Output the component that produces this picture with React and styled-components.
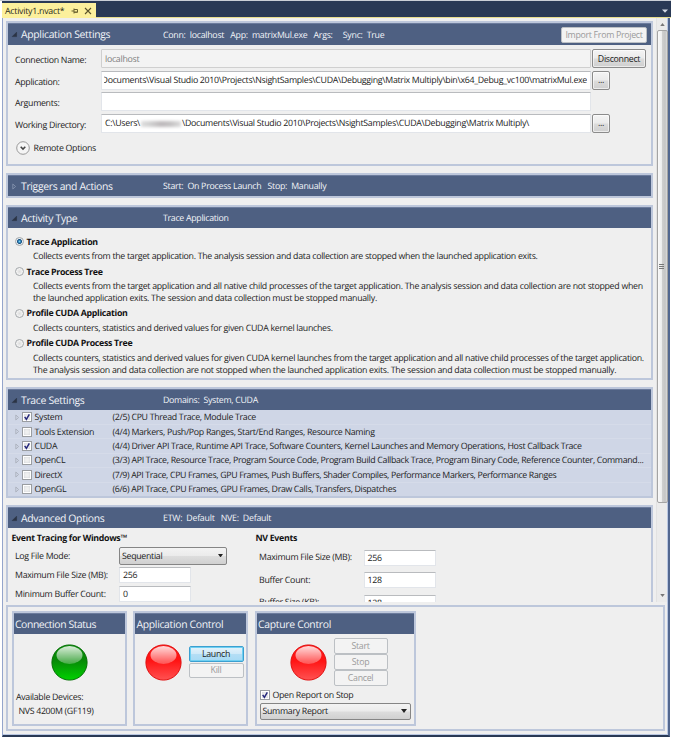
import React from 'react';
import styled, { createGlobalStyle, css } from 'styled-components';

const Global = createGlobalStyle`
  * { box-sizing: border-box; }
  html, body { margin: 0; padding: 0; background: #fff; overflow: hidden; }
  body {
    font-family: "Open Sans", "Noto Sans", sans-serif;
    font-size: 8.8px;
    line-height: 12px;
    letter-spacing: -0.3px;
    color: #222;
    text-rendering: geometricPrecision;
    white-space: pre;
  }
`;

const Window = styled.div`
  width: 671px; height: 737px; margin-left: 0;
  padding-left: 2px;
  display: flex; flex-direction: column;
  border-top: 1px solid #c9ced6;
`;
const TabStrip = styled.div`
  height: 17px; background: #293955; flex: none;
  border-bottom: 1px solid #e6dc8e;
  display: flex; justify-content: space-between; align-items: flex-end;
`;
const Tab = styled.div`
  width: 94px; height: 15px; margin-bottom: -1px; padding: 0 4px 0 3px;
  background: #fcf09c; color: #2b2a20;
  display: flex; align-items: center;
  letter-spacing: -0.26px;
`;
const TabPin = styled.svg`margin-left: 7px; flex: none;`;
const TabClose = styled.svg`margin-left: 5px; flex: none;`;
const StripMenu = styled.svg`margin: 0 3px 4px 0;`;
const Body = styled.div`
  flex: 1; background: #efefef;
  border-left: 1px solid #94a5cb;
  border-right: 2px solid #52678f;
  border-bottom: 2px solid #293955;
  box-shadow: inset -1px -1px 0 #b9c7e2;
  width: 668px;
  display: flex; flex-direction: column;
`;
const ScrollArea = styled.div`
  height: 584px; flex: none; display: flex; overflow: hidden;
`;
const Content = styled.div`
  width: 650px; padding: 3px 0 0 3px; flex: none;
  display: flex; flex-direction: column; gap: 7px;
`;

const Panel = styled.section`
  border: 2px solid #bdc7db; flex: none;
  height: ${(p) => p.$h}px; overflow: hidden;
  background: ${(p) => (p.$tint ? '#cfd6e6' : '#efefef')};
`;
const Header = styled.header`
  height: ${(p) => p.$h || 21}px; background: #4e6082; color: #f3f5f9;
  border-top: 1px solid #6c7c9d;
  display: grid; grid-template-columns: 13px 142px 1fr auto; align-items: center;
  padding: 0 4px 0 0;
`;
const HeaderArrow = styled.div`margin-left: 3px; opacity: 0.85; height: 7px; display: flex;`;
const Title = styled.h2`
  margin: 0; padding-top: 1px; font-size: 10.4px; font-weight: 400; line-height: 14px;
  letter-spacing: ${(p) => p.$ls || -0.31}px;
`;
const Summary = styled.div`letter-spacing: ${(p) => p.$ls || -0.3}px;`;

const Button = styled.button`
  font: inherit; letter-spacing: inherit; padding: 0; margin: 0;
  width: ${(p) => p.$w}px; height: ${(p) => p.$h}px;
  display: flex; align-items: center; justify-content: center;
  border: 1px solid #8b8b8b; border-radius: 2px; color: #222;
  background: linear-gradient(#f4f4f4, #ebebeb 48%, #dcdcdc 52%, #cfcfcf);
  box-shadow: inset 0 0 0 1px rgba(255, 255, 255, 0.6);
  ${(p) => p.$kind === 'off' && css`
    border-color: #bcc0c4; background: #f3f3f3; color: #9b9b9b; box-shadow: none;
  `}
  ${(p) => p.$kind === 'hot' && css`
    border-color: #3c9fd0; background: linear-gradient(#e4f3fb, #cfe9f8 48%, #b4def5 52%, #a6daf5);
    box-shadow: inset 0 0 0 1px #6fd0f2;
  `}
`;

const Form = styled.div`
  padding: 4px 0 0 7px; display: flex; flex-direction: column;
`;
const FormRow = styled.div`
  display: grid; grid-template-columns: 86px 490px auto; column-gap: 0;
  height: 21.6px; align-items: start;
`;
const FormLabel = styled.label`line-height: 22px;`;
const Field = styled.div`
  height: ${(p) => p.$h || 19}px; width: ${(p) => (p.$w ? p.$w + 'px' : 'auto')};
  background: ${(p) => (p.$off ? '#f3f3f3' : '#fff')};
  color: ${(p) => (p.$off ? '#808080' : '#222')};
  border: 1px solid #e2e5ea; border-top-color: #b9bbbe;
  ${(p) => p.$off && css`border-color: #cfcfcf; border-radius: 1px;`}
  display: flex; align-items: center;
  padding: 0 3px; overflow: hidden;
  letter-spacing: ${(p) => p.$ls || -0.29}px;
`;
const TailClip = styled.div`
  flex: 1; min-width: 0; overflow: hidden; display: flex; justify-content: flex-end;
  margin-left: -1px;
`;
const TailText = styled.span`flex: none; letter-spacing: -0.293px;`;
const Redacted = styled.span`
  width: 40px; height: 6px; margin: 1px 1px 0 1px; filter: blur(1.6px);
  background: linear-gradient(90deg, #dedede, #cfcfcf 25%, #bdb9bb 50%, #c4c2c3 75%, #dcdcdc);
`;
const BrowseSlot = styled.div`padding-left: 1px;`;
const Remote = styled.div`
  display: flex; align-items: center; gap: 3.5px; height: 18px; margin: 4px 0 0 1px;
`;

const Choices = styled.div`padding: 7px 0 0 7px;`;
const Choice = styled.div`height: ${(p) => p.$h}px;`;
const ChoiceHead = styled.div`
  display: flex; align-items: center; gap: 2.5px; height: 13px;
  font-weight: 700; letter-spacing: -0.31px; color: #111;
`;
const ChoiceText = styled.p`
  margin: 3.4px 0 0 18px; line-height: 11.6px; letter-spacing: ${(p) => p.$ls || -0.295}px;
`;
const Radio = styled.span`
  width: 9px; height: 9px; border-radius: 50%; border: 1px solid #a3a7aa;
  background: ${(p) => (p.$on
    ? 'radial-gradient(circle, #7cd3f7 0, #1c6fa8 32%, #164d7c 42%, #e8eef2 58%)'
    : 'radial-gradient(circle, #dcdcdc 0, #f6f6f6 70%)')};
`;

const TraceList = styled.div`display: flex; flex-direction: column; padding-top: 0.6px;`;
const TraceRow = styled.div`
  height: 14.4px; border-bottom: 1px solid #d5dbe9; padding-left: 6px;
  display: grid; grid-template-columns: 8px 12.5px 78px 1fr; align-items: center;
`;
const TraceDesc = styled.div`letter-spacing: ${(p) => p.$ls || -0.31}px;`;
const Check = styled.span`
  width: 10px; height: 10px; border: 1px solid #9a9da1; background: #f3f3f3;
  box-shadow: inset 0 0 0 1px #fff, inset 0 0 3px 1px #cfd2d6;
  display: flex; flex: none;
`;

const Advanced = styled.div`
  display: grid; grid-template-columns: 244px 1fr; padding: 3px 0 0 3.5px;
`;
const Group = styled.div`display: flex; flex-direction: column;`;
const GroupTitle = styled.h3`
  margin: 0; font-size: 8.8px; font-weight: 700; color: #111; line-height: 14px;
  letter-spacing: -0.31px;
`;
const OptionRow = styled.div`
  display: grid; grid-template-columns: ${(p) => p.$label}px auto; align-items: center;
  justify-content: start; height: ${(p) => p.$h}px; padding-left: 3.5px;
`;
const OptionLabel = styled.div`padding-bottom: ${(p) => p.$up || 0}px; letter-spacing: -0.28px;`;

const Select = styled.div`
  width: ${(p) => p.$w}px; height: ${(p) => p.$h}px; padding: 0 3px 0 2px;
  border: 1px solid #858585; border-radius: 2px;
  background: linear-gradient(#f3f3f3, #ebebeb 48%, #dddddd 52%, #d0d0d0);
  display: flex; align-items: center; justify-content: space-between;
`;

const ScrollBar = styled.div`
  margin-left: 3px; width: 11px; background: #ebebeb; border-left: 1px solid #e2e2e2;
  display: flex; flex-direction: column; align-items: center; justify-content: space-between;
`;
const ArrowBox = styled.div`
  height: ${(p) => p.$h}px; display: flex; align-items: center; justify-content: center;
`;
const Thumb = styled.div`
  width: 11px; height: 473px; margin-bottom: auto;
  border: 1px solid #a4a4a4; border-radius: 2px;
  background: linear-gradient(90deg, #fafafa, #ededed 40%, #cecece 50%, #c5c5c5 80%, #dcdcdc);
  display: flex; align-items: center; justify-content: center;
`;

const Dock = styled.div`
  margin: 3px 0 0 3px; width: 659px; height: 126px; flex: none;
  border: 2px solid #bdc7db; padding: 4px 4px 4px 3.5px; display: flex; gap: 6.5px;
`;
const Card = styled.section`
  width: ${(p) => p.$w}px; height: 115px; border: 2px solid #bdc7db;
  display: flex; flex-direction: column;
`;
const CardHead = styled.header`
  height: 21px; flex: none; background: #4e6082; color: #f3f5f9;
  border-top: 1px solid #6c7c9d; padding-left: 1.5px;
  display: flex; align-items: center;
`;
const LampRow = styled.div`
  height: 56px; display: flex; align-items: center;
  padding-left: ${(p) => p.$pad}px; gap: 7px;
`;
const ButtonStack = styled.div`display: flex; flex-direction: column; gap: 0.5px;`;
const DeviceLabel = styled.div`margin: 0.5px 0 2px 2.5px;`;
const DeviceName = styled.div`margin-left: 5px; letter-spacing: -0.32px;`;
const ReportOption = styled.div`
  display: flex; align-items: center; gap: 3px; height: 14px; margin: -2px 0 0.5px 3px;
`;
const SelectSlot = styled.div`margin-left: 3px;`;

const Caret = ({ w = 6, h = 4, color = '#222', up }) => (
  <svg width={w} height={h} viewBox="0 0 6 4">
    <path d={up ? 'M0 4L3 0L6 4Z' : 'M0 0H6L3 4Z'} fill={color} />
  </svg>
);

const TreeArrow = ({ open, dark }) => (
  <svg width="7" height="7" viewBox="0 0 7 7">
    {open
      ? <path d="M5.6 1.2V5.6H1.2Z" fill="#252c3a" stroke="#252c3a" strokeWidth=".6" />
      : <path d="M1.8 1L4.6 3.5L1.8 6Z" fill="none" stroke={dark ? '#95a2bb' : '#a6abb5'} strokeWidth=".8" />}
  </svg>
);

const CheckBox = ({ on }) => (
  <Check>
    {on && (
      <svg width="8" height="8" viewBox="0 0 8 8">
        <path d="M1.7 3.8L3.4 6.3L6.3 1.3" fill="none" stroke="#26297c" strokeWidth="1.5" />
      </svg>
    )}
  </Check>
);

const Lamp = ({ id, base, edge, glow }) => (
  <svg width="37" height="37" viewBox="0 0 37 37">
    <defs>
      <linearGradient id={id} x1="0" y1="0" x2="0" y2="1">
        <stop offset="0" stopColor={base} />
        <stop offset=".45" stopColor={base} />
        <stop offset="1" stopColor={glow} />
      </linearGradient>
      <linearGradient id={id + '-shine'} x1="0" y1="0" x2="0" y2="1">
        <stop offset="0" stopColor="#fff" stopOpacity=".85" />
        <stop offset="1" stopColor="#fff" stopOpacity=".25" />
      </linearGradient>
    </defs>
    <circle cx="18.5" cy="18.5" r="17.6" fill={`url(#${id})`} stroke={edge} strokeWidth="1" />
    <ellipse cx="18.5" cy="11" rx="13" ry="9" fill={`url(#${id}-shine)`} />
  </svg>
);
const RedLamp = ({ id }) => <Lamp id={id} base="#ff1414" edge="#e01010" glow="#ff5252" />;

const SectionHeader = ({ title, ls, summary, sls, open, h, children }) => (
  <Header $h={h}>
    <HeaderArrow><TreeArrow open={open} dark /></HeaderArrow>
    <Title $ls={ls}>{title}</Title>
    <Summary $ls={sls}>{summary}</Summary>
    {children}
  </Header>
);

const traces = [
  ['System', true, '(2/5) CPU Thread Trace, Module Trace'],
  ['Tools Extension', false, '(4/4) Markers, Push/Pop Ranges, Start/End Ranges, Resource Naming'],
  ['CUDA', true, '(4/4) Driver API Trace, Runtime API Trace, Software Counters, Kernel Launches and Memory Operations, Host Callback Trace'],
  ['OpenCL', false, '(3/3) API Trace, Resource Trace, Program Source Code, Program Build Callback Trace, Program Binary Code, Reference Counter, Command...'],
  ['DirectX', false, '(7/9) API Trace, CPU Frames, GPU Frames, Push Buffers, Shader Compiles, Performance Markers, Performance Ranges', -0.35],
  ['OpenGL', false, '(6/6) API Trace, CPU Frames, GPU Frames, Draw Calls, Transfers, Dispatches', -0.34],
];

const activities = [
  { name: 'Trace Application', on: true, h: 30, text: 'Collects events from the target application. The analysis session and data collection are stopped when the launched application exits.' },
  { name: 'Trace Process Tree', h: 41.7, ls: -0.28, text: 'Collects events from the target application and all native child processes of the target application. The analysis session and data collection are not stopped when\nthe launched application exits. The session and data collection must be stopped manually.' },
  { name: 'Profile CUDA Application', h: 30, text: 'Collects counters, statistics and derived values for given CUDA kernel launches.' },
  { name: 'Profile CUDA Process Tree', h: 40, ls: -0.285, text: 'Collects counters, statistics and derived values for given CUDA kernel launches from the target application and all native child processes of the target application.\nThe analysis session and data collection are not stopped when the launched application exits. The session and data collection must be stopped manually.' },
];

export default function App() {
  return (
    <>
      <Global />
      <Window>
        <TabStrip>
          <Tab>
            Activity1.nvact*
            <TabPin width="8" height="8" viewBox="0 0 8 8">
              <path d="M0.5 4H3M3 1.5V6.5M3 2.5H6.5V5.2H3M3 5.2H6.5" fill="none" stroke="#6b6330" strokeWidth="1" />
            </TabPin>
            <TabClose width="8" height="8" viewBox="0 0 8 8">
              <path d="M1 1L7 7M7 1L1 7" stroke="#5a532c" strokeWidth="1.1" />
            </TabClose>
          </Tab>
          <StripMenu width="6" height="4" viewBox="0 0 6 4">
            <path d="M0 0.5H6L3 3.8Z" fill="#d3d9e4" />
          </StripMenu>
        </TabStrip>
        <Body>
          <ScrollArea>
            <Content>
              <Panel $h={145}>
                <SectionHeader h={22} title="Application Settings" open sls={-0.26}
                  summary={'Conn:  localhost   App:  matrixMul.exe   Args:     Sync:  True'}>
                  <Button $w={86} $h={16} $kind="off">Import From Project</Button>
                </SectionHeader>
                <Form>
                  <FormRow>
                    <FormLabel>Connection Name:</FormLabel>
                    <Field $off>localhost</Field>
                    <BrowseSlot><Button $w={54} $h={19}>Disconnect</Button></BrowseSlot>
                  </FormRow>
                  <FormRow>
                    <FormLabel>Application:</FormLabel>
                    <Field>
                      <TailClip>
                        <TailText>{'Documents\\Visual Studio 2010\\Projects\\NsightSamples\\CUDA\\Debugging\\Matrix Multiply\\bin\\x64_Debug_vc100\\matrixMul.exe'}</TailText>
                      </TailClip>
                    </Field>
                    <BrowseSlot><Button $w={18} $h={19}>...</Button></BrowseSlot>
                  </FormRow>
                  <FormRow>
                    <FormLabel>Arguments:</FormLabel>
                    <Field />
                  </FormRow>
                  <FormRow>
                    <FormLabel>Working Directory:</FormLabel>
                    <Field>
                      {'C:\\Users\\'}<Redacted />{'\\Documents\\Visual Studio 2010\\Projects\\NsightSamples\\CUDA\\Debugging\\Matrix Multiply\\'}
                    </Field>
                    <BrowseSlot><Button $w={18} $h={19}>...</Button></BrowseSlot>
                  </FormRow>
                  <Remote>
                    <svg width="14" height="14" viewBox="0 0 14 14">
                      <circle cx="7" cy="7" r="6.3" fill="#f5f5f5" stroke="#909090" strokeWidth=".9" />
                      <path d="M4.7 5.7L7 8.1L9.3 5.7" fill="none" stroke="#444" strokeWidth="1.5" />
                    </svg>
                    Remote Options
                  </Remote>
                </Form>
              </Panel>

              <Panel $h={25}>
                <SectionHeader title="Triggers and Actions" ls={-0.33} sls={-0.26} summary={'Start:  On Process Launch   Stop:  Manually'} />
              </Panel>

              <Panel $h={175}>
                <SectionHeader title="Activity Type" open summary="Trace Application" />
                <Choices>
                  {activities.map((a) => (
                    <Choice key={a.name} $h={a.h}>
                      <ChoiceHead><Radio $on={a.on} />{a.name}</ChoiceHead>
                      <ChoiceText $ls={a.ls}>{a.text}</ChoiceText>
                    </Choice>
                  ))}
                </Choices>
              </Panel>

              <Panel $h={111} $tint>
                <SectionHeader title="Trace Settings" open summary={'Domains:  System, CUDA'} />
                <TraceList>
                  {traces.map(([name, on, desc, ls]) => (
                    <TraceRow key={name}>
                      <TreeArrow />
                      <CheckBox on={on} />
                      <span>{name}</span>
                      <TraceDesc $ls={ls}>{desc}</TraceDesc>
                    </TraceRow>
                  ))}
                </TraceList>
              </Panel>

              <Panel $h={140}>
                <SectionHeader title="Advanced Options" open sls={-0.24} summary={'ETW:  Default   NVE:  Default'} />
                <Advanced>
                  <Group>
                    <GroupTitle>Event Tracing for Windows™</GroupTitle>
                    <OptionRow $label={104} $h={21}>
                      <OptionLabel>Log File Mode:</OptionLabel>
                      <Select $w={108} $h={18}>Sequential<Caret w={5} h={3.5} /></Select>
                    </OptionRow>
                    <OptionRow $label={104} $h={18.5}>
                      <OptionLabel>Maximum File Size (MB):</OptionLabel>
                      <Field $w={72} $h={16}>256</Field>
                    </OptionRow>
                    <OptionRow $label={104} $h={18.5}>
                      <OptionLabel>Minimum Buffer Count:</OptionLabel>
                      <Field $w={72} $h={16}>0</Field>
                    </OptionRow>
                  </Group>
                  <Group>
                    <GroupTitle>NV Events</GroupTitle>
                    <OptionRow $label={104.5} $h={26}>
                      <OptionLabel $up={3}>Maximum File Size (MB):</OptionLabel>
                      <Field $w={72} $h={16}>256</Field>
                    </OptionRow>
                    <OptionRow $label={104.5} $h={18.5}>
                      <OptionLabel $up={1}>Buffer Count:</OptionLabel>
                      <Field $w={72} $h={16}>128</Field>
                    </OptionRow>
                    <OptionRow $label={104.5} $h={26}>
                      <OptionLabel $up={2}>Buffer Size (KB):</OptionLabel>
                      <Field $w={72} $h={16}>128</Field>
                    </OptionRow>
                  </Group>
                </Advanced>
              </Panel>
            </Content>
            <ScrollBar>
              <ArrowBox $h={12}><Caret up w={5} h={3} color="#777" /></ArrowBox>
              <Thumb>
                <svg width="6" height="6" viewBox="0 0 6 6">
                  <path d="M0 .5H5M0 2.5H5M0 4.5H5" stroke="#777" strokeWidth="1" />
                </svg>
              </Thumb>
              <ArrowBox $h={13}><Caret w={5} h={3} color="#777" /></ArrowBox>
            </ScrollBar>
          </ScrollArea>

          <Dock>
            <Card $w={115}>
              <CardHead><Title $ls={-0.42}>Connection Status</Title></CardHead>
              <LampRow $pad={37}><Lamp id="green" base="#078a07" edge="#067006" glow="#00d200" /></LampRow>
              <DeviceLabel>Available Devices:</DeviceLabel>
              <DeviceName>NVS 4200M (GF119)</DeviceName>
            </Card>
            <Card $w={115}>
              <CardHead><Title $ls={-0.32}>Application Control</Title></CardHead>
              <LampRow $pad={9.5}>
                <RedLamp id="red-app" />
                <ButtonStack>
                  <Button $w={55} $h={16} $kind="hot">Launch</Button>
                  <Button $w={55} $h={15} $kind="off">Kill</Button>
                </ButtonStack>
              </LampRow>
            </Card>
            <Card $w={161}>
              <CardHead><Title $ls={-0.3}>Capture Control</Title></CardHead>
              <LampRow $pad={33}>
                <RedLamp id="red-cap" />
                <ButtonStack>
                  <Button $w={54} $h={15.5} $kind="off">Start</Button>
                  <Button $w={54} $h={15.5} $kind="off">Stop</Button>
                  <Button $w={54} $h={15.5} $kind="off">Cancel</Button>
                </ButtonStack>
              </LampRow>
              <ReportOption><CheckBox on />Open Report on Stop</ReportOption>
              <SelectSlot><Select $w={151} $h={17}>Summary Report<Caret w={6} h={4} /></Select></SelectSlot>
            </Card>
          </Dock>
        </Body>
      </Window>
    </>
  );
}
